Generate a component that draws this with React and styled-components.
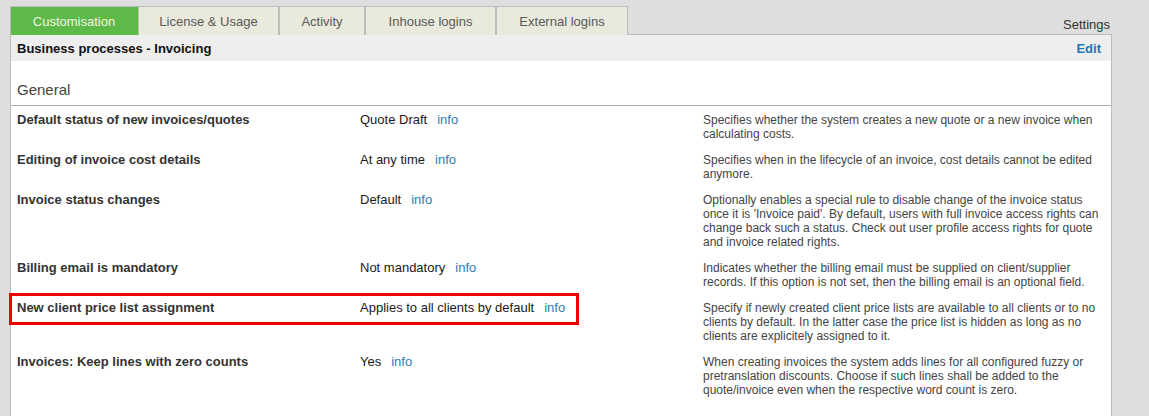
import React from "react";
import styled, { createGlobalStyle } from "styled-components";

const tabs = [
  { name: "Customisation", width: 128 },
  { name: "License & Usage", width: 141 },
  { name: "Activity", width: 86 },
  { name: "Inhouse logins", width: 131 },
  { name: "External logins", width: 132 },
];

const settings = [
  {
    label: "Default status of new invoices/quotes",
    value: "Quote Draft",
    text: "Specifies whether the system creates a new quote or a new invoice when calculating costs.",
  },
  {
    label: "Editing of invoice cost details",
    value: "At any time",
    text: "Specifies when in the lifecycle of an invoice, cost details cannot be edited anymore.",
  },
  {
    label: "Invoice status changes",
    value: "Default",
    text: "Optionally enables a special rule to disable change of the invoice status once it is 'Invoice paid'. By default, users with full invoice access rights can change back such a status. Check out user profile access rights for quote and invoice related rights.",
  },
  {
    label: "Billing email is mandatory",
    value: "Not mandatory",
    text: "Indicates whether the billing email must be supplied on client/supplier records. If this option is not set, then the billing email is an optional field.",
  },
  {
    label: "New client price list assignment",
    value: "Applies to all clients by default",
    text: "Specify if newly created client price lists are available to all clients or to no clients by default. In the latter case the price list is hidden as long as no clients are explicitely assigned to it.",
    highlight: true,
  },
  {
    label: "Invoices: Keep lines with zero counts",
    value: "Yes",
    text: "When creating invoices the system adds lines for all configured fuzzy or pretranslation discounts. Choose if such lines shall be added to the quote/invoice even when the respective word count is zero.",
  },
];

const App = () => {
  return (
    <>
      <GlobalStyle />
      <Page>
        <TabBar>
          <Tabs>
            {tabs.map((t, i) => (
              <Tab key={t.name} $active={i === 0} $width={t.width}>{t.name}</Tab>
            ))}
          </Tabs>
          <Crumb>Settings</Crumb>
        </TabBar>
        <Panel>
          <Header>
            <Title>Business processes - Invoicing</Title>
            <EditLink>Edit</EditLink>
          </Header>
          <Section>General</Section>
          <Rows>
            {settings.map((s) => (
              <Row key={s.label}>
                {s.highlight && <Highlight />}
                <Label>{s.label}</Label>
                <Value>
                  {s.value}
                  <Info>info</Info>
                </Value>
                <Description>{s.text}</Description>
              </Row>
            ))}
          </Rows>
        </Panel>
      </Page>
    </>
  );
};

const GlobalStyle = createGlobalStyle`
  body {
    margin: 0;
    background: #dedede;
    font-family: "Liberation Sans", Arial, sans-serif;
  }
`;

const Page = styled.div`
  padding: 6px 0 0 10px;
  width: 1102px;
  height: 410px;
  overflow: hidden;
`;

const TabBar = styled.div`
  display: flex;
  justify-content: space-between;
  align-items: flex-end;
`;

const Tabs = styled.div`
  display: flex;
`;

const Tab = styled.div`
  position: relative;
  z-index: 1;
  width: ${({ $width }) => $width}px;
  height: 29px;
  margin-bottom: -1px;
  padding-top: 1px;
  box-sizing: border-box;
  display: flex;
  align-items: center;
  justify-content: center;
  border: 1px solid #bdbdbd;
  border-bottom: none;
  font-size: 13px;
  background: ${({ $active }) => ($active ? "#5db948" : "#e9e9dc")};
  color: ${({ $active }) => ($active ? "#f4f4e0" : "#5a5a5a")};
  ${({ $active }) => $active && "border-right-color: #5db948;"}
`;

const Crumb = styled.div`
  font-size: 13px;
  color: #333;
  padding: 0 2px 2px 0;
`;

const Panel = styled.div`
  border: 1px solid #bbbbbb;
  background: #fff;
  height: 500px;
`;

const Header = styled.div`
  height: 26px;
  background: #eeeeee;
  display: flex;
  justify-content: space-between;
  align-items: center;
  padding: 0 10px 0 6px;
`;

const Title = styled.div`
  font-size: 13px;
  font-weight: bold;
  color: #111;
`;

const EditLink = styled.a`
  font-size: 13px;
  font-weight: bold;
  color: #1b78b8;
  cursor: pointer;
`;

const Section = styled.div`
  font-size: 15px;
  color: #444;
  padding: 20px 6px 7px;
  line-height: 17px;
  border-bottom: 1px solid #a9a9a9;
`;

const Rows = styled.div`
  padding-top: 7px;
`;

const Row = styled.div`
  position: relative;
  display: grid;
  grid-template-columns: 343px 343px 400px;
  padding: 0 0 12px 6px;
  line-height: 14px;
`;

const Highlight = styled.div`
  position: absolute;
  left: -2px;
  top: -8px;
  width: 570px;
  height: 32px;
  box-sizing: border-box;
  border: 3px solid #f20000;
`;

const Label = styled.div`
  font-size: 13px;
  font-weight: bold;
  color: #333;
`;

const Value = styled.div`
  font-size: 13px;
  color: #1a1a1a;
`;

const Info = styled.a`
  color: #2d7cb5;
  margin-left: 10px;
  cursor: pointer;
`;

const Description = styled.div`
  font-size: 12px;
  color: #444;
`;

export default App;
